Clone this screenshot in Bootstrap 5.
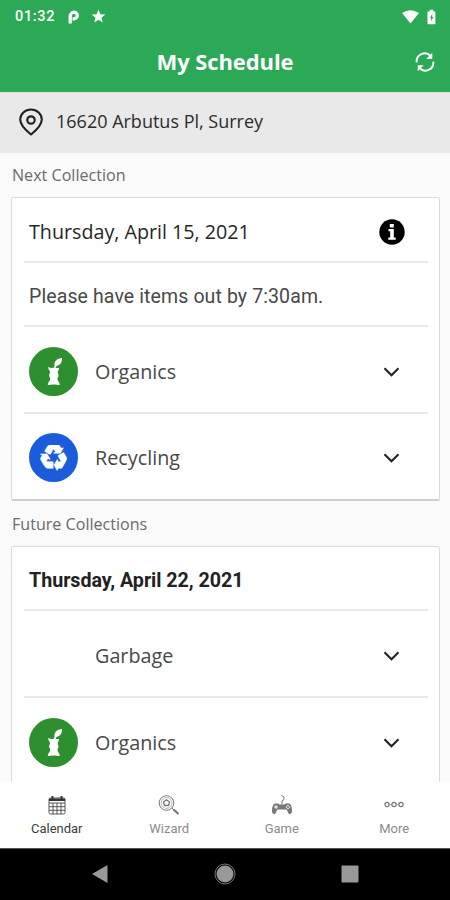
<!DOCTYPE html>
<html lang="en">
<head>
<meta charset="utf-8">
<meta name="viewport" content="width=device-width, initial-scale=1">
<title>My Schedule</title>
<link href="https://cdn.jsdelivr.net/npm/bootstrap@5.3.0/dist/css/bootstrap.min.css" rel="stylesheet">
<style>
body{font-family:"Open Sans","Noto Sans",sans-serif;background:#fafafa;color:#333;height:900px;overflow:hidden;line-height:1.2}
svg{display:block;flex:none}
.topbar{background:#2ba957;height:92px}
.statusbar{height:32px;padding:1px 14px 0 15px;font:500 14.5px/32px Roboto,sans-serif;letter-spacing:.65px}
.status-p{margin-left:13px}
.status-star{margin-left:8px}
.titlebar{height:60px;font-weight:700;font-size:22px;padding-bottom:1px}
.refresh-btn{width:50px}
.title-text{letter-spacing:-.1px}
.address{height:61px;background:#e9e9e9;padding:0 0 2px 18px;font-size:18px;color:#2c2c2c;border-top:1px solid #ddd}
.section-label{font-size:16.1px;color:#6a6a6a;padding:2px 0 0 12px;height:44px}
.section-label.later{height:45px}
.schedule{width:429px;margin-left:11px;border:1px solid #dcdcdc;border-radius:2px;background:#fff;padding:0 11px 0 12px}
.schedule.closed{border-bottom:2px solid #cfcfcf}
.line-item{border-bottom:2px solid #e8e8e8;padding:0 23px 0 5px;font-size:19.8px;color:#484848}
.line-item:last-child{border-bottom:0}
.date-row,.notice-row{height:64px}
.date-row{padding-top:4px}
.date-row.next-date{height:65px;padding-top:4px;color:#262626;font-size:19.7px}
.date-row.strong-date{padding-top:5px;font:700 19.7px Roboto,sans-serif;color:#222;letter-spacing:-.03px}
.notice-row{padding-top:5px;font-family:Roboto,sans-serif;font-size:19.5px;letter-spacing:.11px}
.bin-row{height:87px;padding-top:4px}
.bin-row:last-child{padding-top:2px}
.closed .bin-row:last-child{height:85px;padding-top:2px}
.bin-icon{width:49px;height:49px;margin-right:17px}
.chev{margin-right:5px}
.tabs{height:66px;background:#fff;font:13px/16px Roboto,sans-serif;color:#8b8b8b}
.tab-item{width:112.5px;padding:9px 0 0 1px}
.tab-item span{margin-top:2px}
.tab-item.current{color:#3c3c3c}
.sysnav{height:52px;background:#000;border-top:1px solid #555;padding-bottom:2px}
</style>
<script src="https://cdn.jsdelivr.net/npm/bootstrap@5.3.0/dist/js/bootstrap.bundle.min.js"></script>
</head>
<body class="d-flex flex-column">
<svg width="0" height="0" class="position-absolute">
<defs>
<symbol id="organics" viewBox="0 0 49 49"><circle cx="24.5" cy="24.5" r="24.5" fill="#2e8f2e"/><path fill="#fff" d="M25.200 20.500l.3-2c-.5-4 2-7 7.500-7.500.3 4-1.500 7-5.500 8L26.500 21H30c.3 2-1.300 2.500-1.300 4.300 0 1.400.9 1.700.9 3.200s-1.100 1.800-1.100 3.500c0 2.300 2.300 2.900 2.300 5.800-2 .8-3.500-.8-6-.1-2.500-.7-4 .9-6 .1 0-2.900 2.400-3.400 2.400-5.800 0-1.700-1.100-2-1.100-3.500s.9-1.800.9-3.200c0-1.800-2-2.500-1.800-5.300 2 .9 4.300 1.200 6 .5z"/></symbol>
<symbol id="chevron" viewBox="0 0 16 10"><path d="M1 1.200 8 8.300 15 1.200" fill="none" stroke="#222" stroke-width="2.100"/></symbol>
</defs>
</svg>
<header class="topbar text-white flex-shrink-0">
<div class="statusbar d-flex align-items-center">
<span>01:32</span>
<svg class="status-p" width="12" height="14" viewBox="0 0 12 14"><path d="M2.200 13.500V6A4 4 0 0 1 6 2.200a3.200 3.200 0 0 1 0 6.600H4.500" fill="none" stroke="#fff" stroke-width="3.300"/></svg>
<svg class="status-star" width="20" height="15" viewBox="0 0 20 15"><path fill="#fff" d="m10.500.5 1.900 4.700 5 .3-3.900 3.200 1.300 4.900-4.300-2.800-4.300 2.800 1.300-4.900-3.900-3.200 5-.3z"/></svg>
<svg class="ms-auto" width="17" height="14" viewBox="0 0 17 14"><path fill="#fff" d="M0 3Q8.500-2.600 17 3L8.500 13.500z"/></svg>
<svg class="ms-2" width="9" height="16" viewBox="0 0 10 16"><path fill="#fff" d="M3 0h4v2h2.300v14H.5V2H3z"/><path fill="#2ba957" d="M5.800 4 3.500 9h1.100v4L7 8H5.800z"/></svg>
</div>
<div class="titlebar d-flex align-items-center">
<div class="refresh-btn"></div>
<div class="title-text flex-fill text-center">My Schedule</div>
<div class="refresh-btn d-flex justify-content-center"><svg width="20" height="20" viewBox="0 0 20 20"><g fill="none" stroke="#fff" stroke-width="1.900"><path d="M1.700 10.300A8 8 0 0 1 15.500 4"/><path d="M18.300 9.700A8 8 0 0 1 4.500 16"/></g><path fill="#fff" d="M17.300.8v6h-6zM2.700 19.200v-6h6z"/></svg></div>
</div>
</header>
<div class="address d-flex align-items-center flex-shrink-0">
<svg width="26" height="28" viewBox="0 0 26 28"><path d="M13 26.500C10 24 2.200 18 2.200 11.500a10.800 10 0 0 1 21.600 0C23.800 18 16 24 13 26.500z" fill="none" stroke="#222" stroke-width="2.100"/><circle cx="13" cy="12" r="3.700" fill="none" stroke="#222" stroke-width="2.200"/></svg>
<span class="ms-2 ps-1">16620 Arbutus Pl, Surrey</span>
</div>
<main class="flex-fill overflow-hidden">
<div class="section-label d-flex align-items-center">Next Collection</div>
<section class="schedule closed">
<div class="line-item date-row next-date d-flex align-items-center justify-content-between"><span>Thursday, April 15, 2021</span>
<svg width="26" height="26" viewBox="0 0 26 26"><circle cx="13" cy="13" r="12.700" fill="#000"/><path fill="#fff" d="M10.800 5h4v3.500h-4zM9.500 10h5.300v8.500h1.900v2.200H9.300v-2.200h1.900v-6.300H9.500z"/></svg></div>
<div class="line-item notice-row d-flex align-items-center"><span>Please have items out by 7:30am.</span></div>
<div class="line-item bin-row d-flex align-items-center"><svg class="bin-icon"><use href="#organics"/></svg><span>Organics</span><svg class="chev ms-auto" width="17" height="10"><use href="#chevron"/></svg></div>
<div class="line-item bin-row d-flex align-items-center"><svg class="bin-icon" viewBox="0 0 49 49"><circle cx="24.500" cy="24.500" r="24.500" fill="#1b5cdb"/><text x="24.500" y="36.500" text-anchor="middle" font-family="DejaVu Sans" font-size="35" fill="#fff" stroke="#fff" stroke-width=".9">♻</text></svg><span>Recycling</span><svg class="chev ms-auto" width="17" height="10"><use href="#chevron"/></svg></div>
</section>
<div class="section-label later d-flex align-items-center">Future Collections</div>
<section class="schedule">
<div class="line-item date-row strong-date d-flex align-items-center"><span>Thursday, April 22, 2021</span></div>
<div class="line-item bin-row d-flex align-items-center"><span class="bin-icon"></span><span>Garbage</span><svg class="chev ms-auto" width="17" height="10"><use href="#chevron"/></svg></div>
<div class="line-item bin-row d-flex align-items-center"><svg class="bin-icon"><use href="#organics"/></svg><span>Organics</span><svg class="chev ms-auto" width="17" height="10"><use href="#chevron"/></svg></div>
</section>
</main>
<nav class="tabs d-flex flex-shrink-0 text-center">
<div class="tab-item current d-flex flex-column align-items-center"><svg width="22" height="28" viewBox="0 0 22 28"><g fill="none" stroke="#555" stroke-width="1"><rect x="3" y="7" width="16" height="16" rx="1.500"/><path d="M3 12h16M3 15.700h16M3 19.300h16M7 12v11M11 12v11M15 12v11"/></g><path fill="#333" d="M3 7.500h16V10H3zM5.500 5h2v3h-2zM14.500 5h2v3h-2z"/></svg><span>Calendar</span></div>
<div class="tab-item d-flex flex-column align-items-center"><svg width="22" height="28" viewBox="0 0 22 28"><g fill="none" stroke="#777"><circle cx="8.500" cy="12" r="7.300"/><circle cx="8.500" cy="12" r="5.400" stroke-width=".5"/><path stroke-width="1.300" d="M8.500 8.800 11.500 11l-1 3.500h-4l-1-3.500z"/><path d="m13.800 17 2 1.800"/><path stroke-width="2.200" d="m15.500 18.500 5 4.500"/></g></svg><span>Wizard</span></div>
<div class="tab-item d-flex flex-column align-items-center"><svg width="22" height="28" viewBox="0 0 22 28"><path d="M11 13.500V10l2-1.500V6l-2.500-1.500" fill="none" stroke="#777"/><path fill="#777" d="M4 12.500h3.500l1 1h5l1-1H18c2 0 3 4 3 7.500 0 3.500-3 4-4 1.500l-1.300-3H6.300L5 21.500c-1 2.500-4 2-4-1.500 0-3.500 1-7.500 3-7.500z"/><path d="M5 14v4M3 16h4" stroke="#fff"/><g fill="#fff"><circle cx="17" cy="14.500" r=".8"/><circle cx="17" cy="17.500" r=".8"/><circle cx="15.500" cy="16" r=".8"/><circle cx="18.500" cy="16" r=".8"/></g></svg><span>Game</span></div>
<div class="tab-item d-flex flex-column align-items-center"><svg width="22" height="28" viewBox="0 0 22 28"><g fill="none" stroke="#777" stroke-width="1.200"><circle cx="4" cy="13.500" r="2.100"/><circle cx="11" cy="13.500" r="2.100"/><circle cx="18" cy="13.500" r="2.100"/><path d="M6 13.500h3M13 13.500h3" stroke-width=".6"/></g></svg><span>More</span></div>
</nav>
<footer class="sysnav d-flex align-items-center flex-shrink-0">
<svg width="450" height="50" viewBox="0 0 450 50"><g fill="#999"><path d="M92 25l15.500-9v18z"/><circle cx="225" cy="25" r="8.500"/><circle cx="225" cy="25" r="10" fill="none" stroke="#777" stroke-width="1"/><rect x="341.500" y="16.500" width="17" height="17" rx="1"/></g></svg>
</footer>
</body>
</html>
